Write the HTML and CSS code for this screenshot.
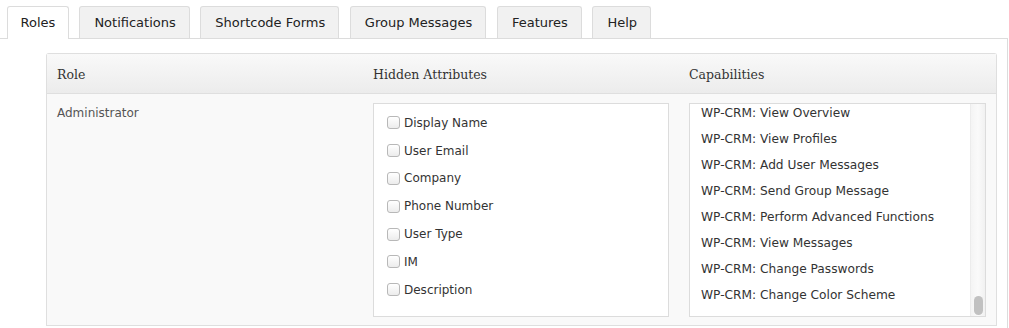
FILE: index.html
```html
<!DOCTYPE html>
<html lang="en">
<head>
  <meta charset="UTF-8" />
  <title>CRM Settings - Roles</title>
  <link rel="stylesheet" href="styles.css">
</head>
<body>

  <!-- Tabs -->
  <div class="nav-tabs">
    <a class="nav-tab active">Roles</a>
    <a class="nav-tab">Notifications</a>
    <a class="nav-tab">Shortcode Forms</a>
    <a class="nav-tab">Group Messages</a>
    <a class="nav-tab">Features</a>
    <a class="nav-tab">Help</a>
  </div>

  <div class="tab-panel">
    <div class="roles-table">
      <!-- Header -->
      <div class="th">Role</div>
      <div class="th">Hidden Attributes</div>
      <div class="th">Capabilities</div>

      <!-- Administrator row -->
      <div class="td role-name">Administrator</div>
      <div class="td">
        <ul class="attr-box">
          <li><input type="checkbox"> Display Name</li>
          <li><input type="checkbox"> User Email</li>
          <li><input type="checkbox"> Company</li>
          <li><input type="checkbox"> Phone Number</li>
          <li><input type="checkbox"> User Type</li>
          <li><input type="checkbox"> IM</li>
          <li><input type="checkbox"> Description</li>
        </ul>
      </div>
      <div class="td">
        <div class="caps-box">
          <ul class="caps-list">
            <li>WP-CRM: View Overview</li>
            <li>WP-CRM: View Profiles</li>
            <li>WP-CRM: Add User Messages</li>
            <li>WP-CRM: Send Group Message</li>
            <li>WP-CRM: Perform Advanced Functions</li>
            <li>WP-CRM: View Messages</li>
            <li>WP-CRM: Change Passwords</li>
            <li>WP-CRM: Change Color Scheme</li>
          </ul>
          <div class="scroll-track"><span class="scroll-thumb"></span></div>
        </div>
      </div>
    </div>
  </div>

</body>
</html>
```
FILE: styles.css
```css
body {
  margin: 0;
  background: #fff;
  font-family: "DejaVu Sans", Verdana, sans-serif;
  color: #333;
  overflow: hidden;
}

/* Tab strip */
.nav-tabs {
  display: flex;
  gap: 10.6px;
  padding: 6px 0 0 7px;
  border-bottom: 1px solid #dcdcdc;
  width: 1001px;
}

.nav-tab {
  display: block;
  height: 31px;
  line-height: 31px;
  padding: 0 13px 0 14px;
  margin-bottom: -1px;
  font-size: 13px;
  color: #222;
  background: #f1f1f1;
  border: 1px solid #dcdcdc;
  border-bottom: 0;
  border-radius: 3px 3px 0 0;
}

.nav-tab.active {
  background: #fff;
  height: 32px;
  padding: 0 12.5px;
}

/* Panel under the tabs */
.tab-panel {
  width: 951px;
  padding: 14px 10px 2px 46px;
  border-right: 1px solid #dcdcdc;
}

/* Roles table */
.roles-table {
  display: grid;
  grid-template-columns: 316px 316px 1fr;
  border: 1px solid #dfdfdf;
  border-bottom: 0;
  border-radius: 3px 3px 0 0;
  background: #f9f9f9;
}

.th {
  height: 39px;
  line-height: 41px;
  padding: 0 10px;
  font-family: "DejaVu Serif", Georgia, serif;
  font-size: 12.5px;
  color: #333;
  background: linear-gradient(#f9f9f9, #ececec);
  border-bottom: 1px solid #dfdfdf;
}

.td {
  padding: 9px 10px 8px;
  border-bottom: 1px solid #dfdfdf;
}

.role-name {
  padding-top: 12px;
  font-size: 12px;
  color: #555;
}

/* Hidden attributes checklist */
.attr-box {
  list-style: none;
  margin: 0;
  height: 204px;
  padding: 5px 13px 3px;
  background: #fff;
  border: 1px solid #dcdcdc;
}

.attr-box li {
  display: flex;
  align-items: center;
  height: 27.8px;
  font-size: 12px;
  color: #333;
}

.attr-box input {
  appearance: none;
  width: 13px;
  height: 13px;
  margin: 0 4px 0 0;
  border: 1px solid #b8b8b8;
  border-radius: 3px;
  background: linear-gradient(#fff, #ececec);
}

/* Capabilities scroll box */
.caps-box {
  display: flex;
  height: 212px;
  background: #fff;
  border: 1px solid #dcdcdc;
  overflow: hidden;
}

.caps-list {
  flex: 1;
  display: flex;
  flex-direction: column;
  justify-content: flex-end;
  list-style: none;
  margin: 0;
  padding: 0 0 8px 11px;
  overflow: hidden;
}

.caps-list li {
  flex: none;
  height: 26px;
  line-height: 26px;
  font-size: 12.2px;
  color: #333;
  white-space: nowrap;
}

.scroll-track {
  width: 14px;
  display: flex;
  flex-direction: column;
  justify-content: flex-end;
  align-items: center;
  padding-bottom: 1px;
  border-left: 1px solid #ececec;
  background: linear-gradient(90deg, #f4f4f4, #fafafa 50%, #f1f1f1);
}

.scroll-thumb {
  width: 9px;
  height: 19px;
  border-radius: 5px;
  background: #c1c1c1;
}
```
